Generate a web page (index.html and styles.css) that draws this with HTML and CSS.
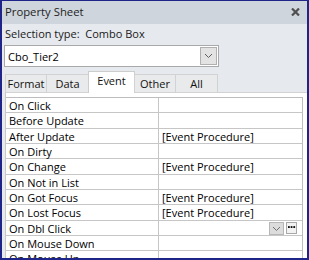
FILE: index.html
```html
<!DOCTYPE html>
<html>
<head>
<meta charset="utf-8">
<link rel="stylesheet" href="styles.css">
</head>
<body>
<div class="window">
  <div class="titlebar">
    <span class="title">Property Sheet</span>
    <svg class="close" width="9" height="8" viewBox="0 0 9 8"><path d="M1 0.5 L8 7.5 M8 0.5 L1 7.5" stroke="#505050" stroke-width="2.2" fill="none"/></svg>
  </div>
  <div class="selection">Selection type:&nbsp; Combo Box</div>
  <div class="combo">
    <span class="combo-text">Cbo_Tier2</span>
    <span class="combo-btn"><svg width="9" height="6" viewBox="0 0 9 6"><path d="M1 1 L4.5 4.5 L8 1" stroke="#606060" stroke-width="1" fill="none"/></svg></span>
  </div>
  <div class="tabs">
    <div class="tab t-format">Format</div>
    <div class="tab t-data">Data</div>
    <div class="tab t-event active">Event</div>
    <div class="tab t-other">Other</div>
    <div class="tab t-all">All</div>
  </div>
  <div class="panel">
    <div class="grid">
      <div class="row"><div class="lbl">On Click</div><div class="val"></div></div>
      <div class="row"><div class="lbl">Before Update</div><div class="val"></div></div>
      <div class="row"><div class="lbl">After Update</div><div class="val">[Event Procedure]</div></div>
      <div class="row"><div class="lbl">On Dirty</div><div class="val"></div></div>
      <div class="row"><div class="lbl">On Change</div><div class="val">[Event Procedure]</div></div>
      <div class="row"><div class="lbl">On Not in List</div><div class="val"></div></div>
      <div class="row"><div class="lbl">On Got Focus</div><div class="val">[Event Procedure]</div></div>
      <div class="row"><div class="lbl">On Lost Focus</div><div class="val">[Event Procedure]</div></div>
      <div class="row"><div class="lbl">On Dbl Click</div><div class="val val-active">
        <span class="drop-btn"><svg width="9" height="6" viewBox="0 0 9 6"><path d="M1 1 L4.5 4.5 L8 1" stroke="#707070" stroke-width="1" fill="none"/></svg></span>
        <span class="dots-btn"><svg width="9" height="3" viewBox="0 0 9 3"><rect x="0" y="0" width="2" height="2" fill="#000"/><rect x="3" y="0" width="2" height="2" fill="#000"/><rect x="6" y="0" width="2" height="2" fill="#000"/></svg></span>
      </div></div>
      <div class="row"><div class="lbl">On Mouse Down</div><div class="val"></div></div>
      <div class="row"><div class="lbl">On Mouse Up</div><div class="val"></div></div>
    </div>
  </div>
</div>
</body>
</html>
```

FILE: styles.css
```css
html, body {
  margin: 0;
  padding: 0;
  width: 309px;
  height: 260px;
  overflow: hidden;
  background: #e6e9ee;
}

.window {
  box-sizing: border-box;
  width: 309px;
  height: 260px;
  border: 2px solid #1e2488;
  border-top-width: 1px;
  background: #e6e9ee;
  display: flex;
  flex-direction: column;
  overflow: hidden;
  font-family: "Open Sans", "Noto Sans", sans-serif;
  font-size: 11px;
  color: #000;
}

.titlebar {
  height: 23px;
  flex: none;
  background: #cfd5dc;
  display: flex;
  align-items: center;
  justify-content: space-between;
  padding: 0 7px 0 3px;
}

.title {
  font-size: 11.3px;
  color: #1e1e1e;
  line-height: 14px;
  margin-top: -1px;
}

.close {
  display: block;
  margin-top: -1px;
}

.selection {
  flex: none;
  height: 17px;
  line-height: 17px;
  padding-left: 3px;
  margin-top: 1px;
  color: #1a1a1a;
}

.combo {
  flex: none;
  box-sizing: border-box;
  width: 215px;
  height: 22px;
  margin: 3px 0 0 2px;
  border: 1px solid #a9a9a9;
  background: #fff;
  display: flex;
  align-items: center;
  justify-content: space-between;
  padding: 0 1px 0 3px;
}

.combo-btn {
  box-sizing: border-box;
  width: 17px;
  height: 18px;
  border: 1px solid #b0b0b0;
  background: #e3e3e3;
  display: flex;
  align-items: center;
  justify-content: center;
}

.tabs {
  flex: none;
  display: flex;
  align-items: flex-end;
  height: 21px;
  margin: 4px 0 0 3px;
  position: relative;
  z-index: 1;
}

.tab {
  box-sizing: border-box;
  height: 18px;
  line-height: 17px;
  border: 1px solid #d2d2d2;
  border-bottom: none;
  background: #e9eaeb;
  text-align: center;
  margin-right: -1px;
  color: #111;
}

.t-format { width: 42px; }
.t-data { width: 43px; }
.t-event { width: 47px; }
.t-other { width: 42px; }
.t-all { width: 43px; }

.tab.active {
  height: 22px;
  line-height: 18px;
  background: #fff;
  margin-bottom: -1px;
  border-color: #cdcdcd;
}

.panel {
  flex: 1;
  margin-left: 3px;
  background: #fff;
  border-top: 1px solid #d2d2d2;
  border-left: 1px solid #c8c8c8;
  padding-top: 4px;
}

.grid {
  width: 297px;
  border-top: 1px solid #bdbdbd;
  border-right: 1px solid #bdbdbd;
  box-sizing: border-box;
}

.row {
  display: grid;
  grid-template-columns: 152px 1fr;
  height: 15.33px;
  box-sizing: border-box;
  border-bottom: 1px solid #c6c6c6;
}

.lbl {
  padding-left: 3px;
  line-height: 14.33px;
  padding-top: 1px;
  white-space: nowrap;
  color: #000;
}

.val {
  border-left: 1px solid #c6c6c6;
  padding-left: 3px;
  line-height: 14.33px;
  padding-top: 1px;
  white-space: nowrap;
  color: #000;
}

.val-active {
  display: flex;
  justify-content: flex-end;
  align-items: center;
  padding-top: 0;
  padding-right: 5px;
  gap: 2px;
}

.drop-btn {
  box-sizing: border-box;
  width: 15px;
  height: 13px;
  border: 1px solid #b7b7b7;
  background: #dcdcdc;
  display: flex;
  align-items: center;
  justify-content: center;
  margin-top: 1px;
}

.dots-btn {
  box-sizing: border-box;
  width: 11px;
  height: 12px;
  border: 1px solid #a8a8a8;
  background: #f2f2f2;
  display: flex;
  align-items: center;
  justify-content: center;
  padding-left: 1px;
  margin-top: -1px;
}

.dots-btn svg {
  display: block;
}
```
